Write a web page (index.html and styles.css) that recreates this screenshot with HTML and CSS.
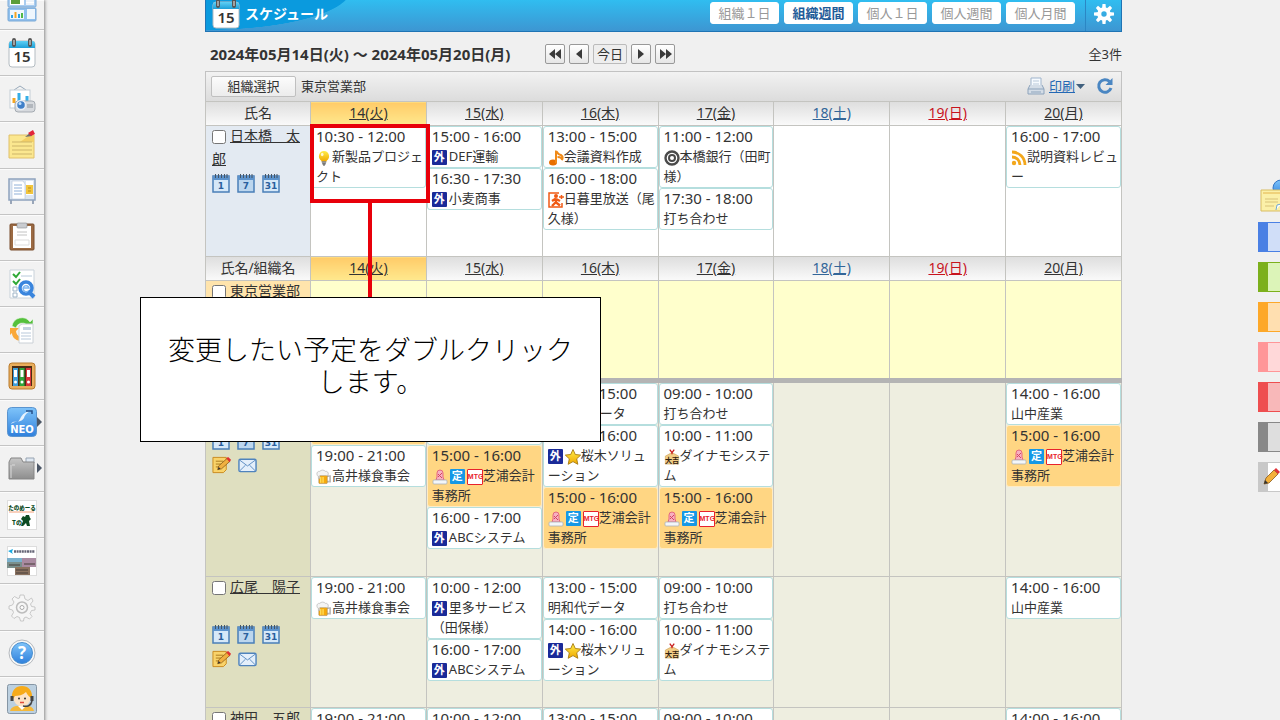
FILE: index.html
```html
<!DOCTYPE html>
<html lang="ja">
<head>
<meta charset="utf-8">
<title>スケジュール</title>
<link rel="stylesheet" href="styles.css">
</head>
<body>
<svg class="defs" aria-hidden="true">
  <defs>
    <linearGradient id="gBlue" x1="0" y1="0" x2="0" y2="1"><stop offset="0" stop-color="#7fc4fa"/><stop offset="1" stop-color="#2f80dc"/></linearGradient>
    <linearGradient id="gCyan" x1="0" y1="0" x2="0" y2="1"><stop offset="0" stop-color="#5fd0f5"/><stop offset="1" stop-color="#1d9fd8"/></linearGradient>
    <linearGradient id="gGold" x1="0" y1="0" x2="0" y2="1"><stop offset="0" stop-color="#ffee4a"/><stop offset="1" stop-color="#f0a800"/></linearGradient>
    <linearGradient id="gGray" x1="0" y1="0" x2="0" y2="1"><stop offset="0" stop-color="#c6c6c6"/><stop offset="1" stop-color="#8e8e8e"/></linearGradient>
  </defs>
  <symbol id="cal15" viewBox="0 0 28 30">
    <rect x="1" y="3" width="26" height="26" rx="3" fill="#fff" stroke="#b4bcc2"/>
    <path d="M1 10V6a3 3 0 0 1 3-3h20a3 3 0 0 1 3 3v4z" fill="url(#gCyan)"/>
    <path d="M6 2v5M22 2v5" stroke="#555" stroke-width="4" stroke-linecap="round"/><path d="M6 2v5M22 2v5" stroke="#bbb" stroke-width="1.5"/>
    <text x="14" y="24" text-anchor="middle" font-size="15" font-weight="600" font-family="Noto Sans, sans-serif" fill="#333">15</text>
  </symbol>
  <symbol id="d1" viewBox="0 0 18 20"><rect x="1" y="3" width="16" height="16" fill="#d6e8f8" stroke="#4a7fb8" stroke-width="1.5"/><path d="M1 3h16v4H1z" fill="#5b92cc"/><path d="M3.500 1v4M6.500 1v4M9.500 1v4M12.500 1v4M15 1v4" stroke="#456" stroke-width="1"/><text x="9" y="16" text-anchor="middle" class="dnum">1</text></symbol>
  <symbol id="d7" viewBox="0 0 18 20"><rect x="1" y="3" width="16" height="16" fill="#bcd6ee" stroke="#4a7fb8" stroke-width="1.5"/><path d="M1 3h16v4H1z" fill="#5b92cc"/><path d="M3.500 1v4M6.500 1v4M9.500 1v4M12.500 1v4M15 1v4" stroke="#456" stroke-width="1"/><text x="9" y="16" text-anchor="middle" class="dnum">7</text></symbol>
  <symbol id="d31" viewBox="0 0 18 20"><rect x="1" y="3" width="16" height="16" fill="#d6e8f8" stroke="#4a7fb8" stroke-width="1.5"/><path d="M1 3h16v4H1z" fill="#5b92cc"/><path d="M3.500 1v4M6.500 1v4M9.500 1v4M12.500 1v4M15 1v4" stroke="#456" stroke-width="1"/><text x="9" y="16" text-anchor="middle" class="dnum">31</text></symbol>
  <symbol id="memo" viewBox="0 0 20 18"><path d="M1 1h14v13l-3 3H1z" fill="#f9d36a" stroke="#c98a1e"/><path d="M4 5h8M4 8h6M4 11h4" stroke="#a9781e"/><path d="M6 14l1-4L16 2l3 3-9 8z" fill="#f0b040" stroke="#8a5a14" stroke-width=".8"/><path d="M15 2l2-1.500 3 3L18.500 6z" fill="#e03030"/><path d="M6 14l1-3 2 2z" fill="#333"/></symbol>
  <symbol id="mail" viewBox="0 0 20 16"><rect x="1" y="2" width="18" height="13" rx="1.500" fill="#e4effb" stroke="#4f83bd" stroke-width="1.500"/><path d="M2 3l8 6 8-6M2 14l6-6M18 14l-6-6" fill="none" stroke="#5c8cc2"/></symbol>
  <symbol id="bulb" viewBox="0 0 16 18"><path d="M8 1a6 6 0 0 0-3 11v1h6v-1A6 6 0 0 0 8 1z" fill="url(#gGold)"/><ellipse cx="6" cy="5" rx="1.500" ry="2" fill="#fff" opacity=".8"/><path d="M5.500 13.500h5M6 15.500h4M7 17h2" stroke="#777" stroke-width="1.500"/></symbol>
  <symbol id="note" viewBox="0 0 16 16"><ellipse cx="5" cy="12.500" rx="4" ry="3" fill="#e87000"/><path d="M8 13V1.500c2 0 1 2.500 3.500 3C14 5 15.500 7 14 10c0-2.500-2.500-3-4.500-3" fill="none" stroke="#f08a18" stroke-width="2"/></symbol>
  <symbol id="exit" viewBox="0 0 16 16"><path d="M11 1H1v14h13v-4" fill="#fff" stroke="#f05a14" stroke-width="1.500"/><circle cx="8" cy="4" r="2" fill="#f05a14"/><path d="M8 6.500L4 9M8 6.500v4l4 3M8 10l-4 4M8 7l4 2" stroke="#f05a14" stroke-width="2.400" fill="none"/><path d="M11 5h5M13.500 3v4" stroke="#f05a14" stroke-width="1.500"/></symbol>
  <symbol id="target" viewBox="0 0 16 16"><circle cx="8" cy="8" r="6.500" fill="#fff" stroke="#4a4a4a" stroke-width="2.400"/><circle cx="8" cy="8" r="3" fill="#fff" stroke="#4a4a4a" stroke-width="2"/></symbol>
  <symbol id="rss" viewBox="0 0 16 16"><g fill="none" stroke="#f3a71b" stroke-width="2.800"><path d="M1 2a13 13 0 0 1 13 13M1 7a8 8 0 0 1 8 8"/></g><circle cx="3" cy="13" r="2.200" fill="#f3a71b"/></symbol>
  <symbol id="beer" viewBox="0 0 17 16"><path d="M11 7h4v6h-4" fill="none" stroke="#b9b9b9" stroke-width="1.800"/><rect x="3" y="5" width="9" height="10" rx="1" fill="#f5a90c" stroke="#a98450" stroke-width=".6"/><path d="M5 8v6M7.500 8v6" stroke="#ffdc58" stroke-width="1.500"/><path d="M1 5a2.500 2.500 0 0 1 3-3 4 4 0 0 1 6 0 2.500 2.500 0 0 1 3 3c0 2-2 1.500-2 1.500H4v3H2.500V7S1 7 1 5z" fill="#f4f4f4" stroke="#a9a9a9" stroke-width=".6"/></symbol>
  <symbol id="stamp" viewBox="0 0 16 16"><path d="M5 8V4a3 3 0 0 1 6 0v4l1 3H4z" fill="#f7b0c0" stroke="#e5687e"/><path d="M6 8l4-4M6 5l4 4" stroke="#d44562"/><rect x="1" y="11" width="14" height="4" rx="1" fill="#f3f6f9" stroke="#aab1b8" stroke-width=".8"/></symbol>
  <symbol id="star" viewBox="0 0 16 16"><path d="M8 .5l2.300 5 5.400.6-4 3.700 1.100 5.500L8 12.600l-4.800 2.700 1.100-5.500-4-3.700 5.400-.6z" fill="url(#gGold)" stroke="#a77a10" stroke-width=".9"/></symbol>
  <symbol id="daikichi" viewBox="0 0 17 18"><path d="M1 8l7.500-4L16 8v9H1z" fill="#f1cc85" stroke="#c79b50" stroke-width=".6"/><path d="M6 .8L8.500 4 11 .8M8.500 3v3" fill="none" stroke="#c81e1e" stroke-width="1.500"/><text x="8.500" y="15.500" text-anchor="middle" font-size="8" font-weight="700" font-family="Noto Sans CJK JP, sans-serif" fill="#302010">大吉</text></symbol>
  <symbol id="gear" viewBox="0 0 20 20"><g fill="currentColor"><path id="tooth" d="M8.500 0h3l.5 5H8z"/><use href="#tooth" transform="rotate(45 10 10)"/><use href="#tooth" transform="rotate(90 10 10)"/><use href="#tooth" transform="rotate(135 10 10)"/><use href="#tooth" transform="rotate(180 10 10)"/><use href="#tooth" transform="rotate(225 10 10)"/><use href="#tooth" transform="rotate(270 10 10)"/><use href="#tooth" transform="rotate(315 10 10)"/></g><circle cx="10" cy="10" r="4.700" fill="none" stroke="currentColor" stroke-width="4"/></symbol>
</svg>

<div class="shell">
  <nav class="side" aria-label="メニュー">
    <a class="side-item side-first" href="#" aria-label="ポータル"><svg width="30" height="32" viewBox="0 0 30 32"><rect x="1" y="0" width="28" height="17" rx="1" fill="#a9cdf0" stroke="#7ba9d6"/><path d="M3 2h14v13H3zM19 2h8v13h-8z" fill="#fff"/><path d="M4 14V8l9-4v10z" fill="#5b9e3a"/><path d="M19 14h8M19 11h8" stroke="#dce8f4"/><rect x="1" y="18" width="28" height="13" rx="1" fill="#8fc0ee" stroke="#7ba9d6"/><path d="M3 20h14v9H3zM20 19h8v10h-8z" fill="#eef6fd"/><path d="M5 28v-3M12 28v-4" stroke="#29a3e8" stroke-width="2"/><path d="M8.500 28v-6" stroke="#f5a623" stroke-width="2"/><path d="M15 28v-5" stroke="#50b848" stroke-width="2"/></svg></a>
    <a class="side-item" href="#" aria-label="スケジュール"><svg width="28" height="30"><use href="#cal15"/></svg></a>
    <a class="side-item" href="#" aria-label="設備予約"><svg width="28" height="30" viewBox="0 0 28 30"><path d="M6 6l6-4 6 4" fill="none" stroke="#9ab"/><rect x="2" y="6" width="20" height="18" fill="#fff" stroke="#c3cdd6"/><path d="M6 19v-5" stroke="#f5a623" stroke-width="3"/><path d="M11 18V9M19 18v-6" stroke="#36aee6" stroke-width="3"/><rect x="7" y="17" width="20" height="11" rx="3" fill="#d7dade" stroke="#a5abb2"/><path d="M19 20h6v4h-6z" fill="#b2b7bd"/><circle cx="13" cy="21" r="4.500" fill="#3f7fc8" stroke="#e8eef5" stroke-width="1.500"/><circle cx="12" cy="19.500" r="1.500" fill="#bfe0ff"/></svg></a>
    <a class="side-item" href="#" aria-label="伝言メモ"><svg width="28" height="30" viewBox="0 0 28 30"><path d="M1 5h25v23H1z" fill="#fbe78f" stroke="#e0c06a"/><path d="M12 12L22 5h4v7z" fill="#f3cf66"/><path d="M4 12h20M4 16h20M4 20h20M4 24h20" stroke="#cdb56a"/><path d="M17 7l5-4 2 3z" fill="#6a6a6a"/><path d="M20 3l5-3 2 4-4 2z" fill="#e2253a"/></svg></a>
    <a class="side-item" href="#" aria-label="掲示板"><svg width="28" height="30" viewBox="0 0 28 30"><path d="M3 24v4M25 24v4" stroke="#9aa6b8" stroke-width="2"/><rect x="1" y="3" width="26" height="21" fill="#dce6f2" stroke="#8fa3bd" stroke-width="1.500"/><path d="M4 5h11l2 3v15H4z" fill="#fff" stroke="#b4c4d8" stroke-width=".6"/><path d="M6 9h8M6 12h8M6 15h8M6 18h8" stroke="#8fb0d8"/><rect x="18" y="5" width="7" height="14" fill="#fff"/><rect x="18" y="9" width="7" height="9" fill="#f2c53d"/><path d="M20 12h3M20 15h3" stroke="#b78d18"/></svg></a>
    <a class="side-item" href="#" aria-label="回覧板"><svg width="28" height="30" viewBox="0 0 28 30"><rect x="2" y="2" width="24" height="26" rx="1" fill="#9b6a43" stroke="#7a4f2e"/><path d="M5 4h18v22H5z" fill="#fff"/><rect x="9" y="1" width="10" height="5" rx="1" fill="#c9ccd0" stroke="#8a8d91" stroke-width=".6"/><path d="M9 10h10M9 13h10" stroke="#c2c2c2"/><path d="M7 18h14v5H7z" fill="none" stroke="#ddd"/></svg></a>
    <a class="side-item" href="#" aria-label="アンケート"><svg width="28" height="30" viewBox="0 0 28 30"><path d="M2 1h24v28H2z" fill="#fff" stroke="#c9d2da"/><path d="M5 5l3 3 4-5M5 12l3 3 4-5" fill="none" stroke="#2fa836" stroke-width="2"/><path d="M5 18h4v4H5zM5 24h4v4H5z" fill="#fff" stroke="#9db3c6"/><path d="M13 7h11" stroke="#b8cadb"/><circle cx="18" cy="19" r="6" fill="#fff" stroke="#3a85dd" stroke-width="3.500"/><path d="M20 22l6 6" stroke="#3a85dd" stroke-width="4"/><path d="M15 19h6a3 3 0 1 0-1 3" stroke="#7fb6f0" stroke-width="1.500" fill="none"/></svg></a>
    <a class="side-item" href="#" aria-label="ワークフロー"><svg width="28" height="30" viewBox="0 0 28 30"><path d="M4 11A10 10 0 0 1 22 7l3-3v9h-9l3-3a6.500 6.500 0 0 0-11 3z" fill="#55c03c" stroke="#e8f7e4" stroke-width=".6"/><path d="M2 13h9l-3 3c0 3 2 5 4 6v4c-5-1-8-4-8-8l-2 2z" fill="#f9a83a"/><path d="M11 11l3-2h11v19H11z" fill="#fff" stroke="#cad0d6"/><path d="M15 12h8v3h-8z" fill="#c3d2e0"/><path d="M13 18h10M13 21h10M13 24h10" stroke="#b9c9da"/></svg></a>
    <a class="side-item" href="#" aria-label="文書管理"><svg width="28" height="28" viewBox="0 0 28 28"><rect x="1" y="1" width="26" height="26" rx="3" fill="#e9ae5c" stroke="#b97a2c"/><path d="M4 4h20v20H4z" fill="#4a2c14"/><path d="M5 6h5v18H5z" fill="#3f9fd8"/><path d="M11.500 6h5v18h-5z" fill="#2fa63c"/><path d="M18 6h5v18h-5z" fill="#d9343c"/><path d="M6 8h3v7H6zM12.500 8h3v7h-3zM19 8h3v7h-3z" fill="#fff"/><g fill="#fff"><circle cx="7.500" cy="20" r="1.500"/><circle cx="14" cy="20" r="1.500"/><circle cx="20.500" cy="20" r="1.500"/></g></svg></a>
    <a class="side-item has-more" href="#" aria-label="NEO"><svg width="30" height="30" viewBox="0 0 30 30"><rect x=".5" y=".5" width="29" height="29" rx="4" fill="url(#gBlue)" stroke="#5a94cf"/><path d="M4 17c3-5 6 1 9-5 2-5 6-8 12-8-3 0-7 3-8 7-3 5-7 2-13 6z" fill="#e9f3fd"/><path d="M19 4h6v3" fill="none" stroke="#27518a" stroke-width="1.500"/><text x="15" y="26" text-anchor="middle" font-size="10" font-weight="700" font-family="DejaVu Sans, sans-serif" fill="#fff">NEO</text></svg></a>
    <a class="side-item has-more" href="#" aria-label="フォルダ"><svg width="28" height="26" viewBox="0 0 28 26"><path d="M18 3h8v5h-8z" fill="#dfe8f2" stroke="#98a4b2"/><path d="M1 7l2-4h10l2 4h11v17H1z" fill="url(#gGray)" stroke="#858585"/><path d="M4 10h3M3 10v13" stroke="#dadada"/></svg></a>
    <a class="side-item" href="#" aria-label="たのめーる"><svg width="30" height="30" viewBox="0 0 30 30"><rect x=".5" y=".5" width="29" height="29" fill="#fff" stroke="#ddd"/><text x="15" y="10" text-anchor="middle" font-size="5.500" font-weight="900" font-family="Noto Sans CJK JP, sans-serif" fill="#0b4a22">たのめーる</text><path d="M2 12h25" stroke="#f08a5a" stroke-width=".8"/><text x="10" y="25" text-anchor="middle" font-size="6" font-weight="900" font-family="Noto Sans CJK JP, sans-serif" fill="#0b4a22">Tの</text><path d="M16 16l2 1 1-2h3l1 3 1 1-2 2 1 5h-3l-1-3-3 3h-2l2-5-2-2z" fill="#0b4a22"/></svg></a>
    <a class="side-item" href="#" aria-label="施設案内"><svg width="30" height="30" viewBox="0 0 30 30"><rect x=".5" y=".5" width="29" height="29" fill="#fff" stroke="#ddd"/><path d="M1 5l5-2-1 3 1 2z" fill="#18a8e0"/><path d="M7 5.500h21" stroke="#667" stroke-width="2.500" stroke-dasharray="2 .6"/><path d="M0 12h15v10H0z" fill="#7a8f8c"/><path d="M0 12h15v4H0z" fill="#7ab0cc"/><path d="M15 12h14v9H15z" fill="#a98aa0"/><path d="M8 21h15v8H8z" fill="#8a7260"/><path d="M9 24h12M9 27h12M2 19h11M17 18h11" stroke="#463c38"/></svg></a>
    <a class="side-item side-gear" href="#" aria-label="設定"><svg width="26" height="26" viewBox="0 0 26 26"><g fill="#f6f6f6" stroke="#bdbdbd"><path d="M11 1h4l1 4 3 1.500L22.500 4 24 7l-2.500 3 1 2.500L26 13v3l-3.500.5-1.500 3 2 3-2.500 2.500-3.500-2-2 1-.5 3h-3l-1-3.500-2.500-1L5 24.500 2.500 22l2-3.500-1-2.500L0 15v-3l3.500-1L5 8 3 5l2.500-2.500 3.500 2 1.500-.5z" stroke-linejoin="round" stroke-width=".8"/><circle cx="13" cy="13.500" r="5.500" stroke-width="1.500"/><circle cx="13" cy="13.500" r="2" fill="#fff" stroke="#aaa"/></g></svg></a>
    <a class="side-item" href="#" aria-label="ヘルプ"><svg width="28" height="28" viewBox="0 0 28 28"><circle cx="14" cy="14" r="13" fill="#f8f8f8" stroke="#b5b9be"/><circle cx="14" cy="14" r="10.500" fill="url(#gBlue)" stroke="#4a90d0"/><text x="14" y="20" text-anchor="middle" font-size="17" font-weight="700" font-family="Open Sans, sans-serif" fill="#fff">?</text></svg></a>
    <a class="side-item" href="#" aria-label="サポート"><svg width="30" height="30" viewBox="0 0 30 30"><rect x=".5" y=".5" width="29" height="29" rx="2" fill="#bcd0e0" stroke="#8595a4"/><path d="M3 27c1-4 5-5 7-5h10c3 0 6 1 7 5z" fill="#f5b83a"/><path d="M11 22h8l-4 4z" fill="#fff"/><circle cx="15" cy="14" r="8.500" fill="#fde3c6"/><path d="M5 15C4 6 9 2 15 2s11 4 10 13c-2-2-5-4-6-7-3 3-8 4-11 4-1 1-1 3-3 3z" fill="#f7ab1a"/><path d="M5 12v5M25 12v5" stroke="#444" stroke-width="3"/><path d="M25 17c-1 5-5 6-9 5" fill="none" stroke="#444" stroke-width="1.500"/><circle cx="12" cy="14.500" r="1" fill="#333"/><circle cx="18" cy="14.500" r="1" fill="#333"/><path d="M13 18.500h4" stroke="#e24a3a" stroke-width="1.500"/></svg></a>
  </nav>

  <main class="main">
    <header class="titlebar">
      <h1 class="title"><svg width="28" height="30"><use href="#cal15"/></svg>スケジュール</h1>
      <div class="tabs">
        <button type="button" class="tab">組織１日</button>
        <button type="button" class="tab tab-on">組織週間</button>
        <button type="button" class="tab">個人１日</button>
        <button type="button" class="tab">個人週間</button>
        <button type="button" class="tab">個人月間</button>
      </div>
      <button type="button" class="config" aria-label="設定"><svg width="20" height="20"><use href="#gear"/></svg></button>
    </header>

    <div class="range">
      <h2 class="range-text">2024年05月14日(火) ～ 2024年05月20日(月)</h2>
      <div class="pager">
        <button type="button" class="step" aria-label="前週"><svg width="13" height="10" viewBox="0 0 13 10"><path d="M6 0v10L0 5zM12 0v10L6 5z" fill="#3a3a3a"/></svg></button>
        <button type="button" class="step" aria-label="前日"><svg width="6" height="10" viewBox="0 0 6 10"><path d="M6 0v10L0 5z" fill="#3a3a3a"/></svg></button>
        <button type="button" class="step today-btn">今日</button>
        <button type="button" class="step" aria-label="翌日"><svg width="6" height="10" viewBox="0 0 6 10"><path d="M0 0v10l6-5z" fill="#3a3a3a"/></svg></button>
        <button type="button" class="step" aria-label="翌週"><svg width="13" height="10" viewBox="0 0 13 10"><path d="M1 0v10l6-5zM7 0v10l6-5z" fill="#3a3a3a"/></svg></button>
      </div>
      <span class="count">全3件</span>
    </div>

    <div class="toolbar">
      <button type="button" class="org-btn">組織選択</button>
      <span class="org-name">東京営業部</span>
      <a class="print" href="#"><svg width="18" height="18" viewBox="0 0 18 18"><path d="M4 1h10v9H4z" fill="#f6fafe" stroke="#9fb4cc"/><path d="M6 4h6M6 7h6" stroke="#b9c9da"/><path d="M3 8L1 12v5h16v-5l-2-4" fill="#d4dde7" stroke="#8da3bb"/><path d="M1 12h16M4 15h10" stroke="#8da3bb"/></svg><span class="print-text">印刷</span><svg width="9" height="5" viewBox="0 0 9 5"><path d="M0 0h9L4.500 5z" fill="#41617f"/></svg></a>
      <button type="button" class="reload" aria-label="更新"><svg width="18" height="18" viewBox="0 0 18 18"><path d="M13.500 4.500A6.300 6.300 0 1 0 15 11" fill="none" stroke="#4a86c2" stroke-width="3"/><path d="M16.500 1v7h-7z" fill="#4a86c2"/></svg></button>
    </div>

    <table class="week">
      <colgroup><col class="col-name"><col span="7"></colgroup>
      <tbody>
        <tr class="days"><th>氏名</th><th class="today"><a href="#">14(火)</a></th><th><a href="#">15(水)</a></th><th><a href="#">16(木)</a></th><th><a href="#">17(金)</a></th><th class="sat"><a href="#">18(土)</a></th><th class="sun"><a href="#">19(日)</a></th><th><a href="#">20(月)</a></th></tr>
        <tr class="row self">
          <td class="who"><div class="person"><input type="checkbox" id="p1" aria-label="日本橋　太郎"><a href="#">日本橋　太郎</a></div>
            <div class="views"><svg><use href="#d1"/></svg><svg><use href="#d7"/></svg><svg><use href="#d31"/></svg></div></td>
          <td><div class="ev">10:30 - 12:00<p><svg class="ic"><use href="#bulb"/></svg>新製品プロジェ<br>クト</p></div></td>
          <td><div class="ev">15:00 - 16:00<p><i class="tag out">外</i>DEF運輸</p></div><div class="ev">16:30 - 17:30<p><i class="tag out">外</i>小麦商事</p></div></td>
          <td><div class="ev">13:00 - 15:00<p><svg class="ic"><use href="#note"/></svg>会議資料作成</p></div><div class="ev">16:00 - 18:00<p><svg class="ic"><use href="#exit"/></svg>日暮里放送（尾<br>久様）</p></div></td>
          <td><div class="ev">11:00 - 12:00<p><svg class="ic"><use href="#target"/></svg>本橋銀行（田町<br>様）</p></div><div class="ev">17:30 - 18:00<p>打ち合わせ</p></div></td>
          <td></td><td></td>
          <td><div class="ev">16:00 - 17:00<p><svg class="ic"><use href="#rss"/></svg>説明資料レビュ<br>ー</p></div></td>
        </tr>
        <tr class="days"><th>氏名/組織名</th><th class="today"><a href="#">14(火)</a></th><th><a href="#">15(水)</a></th><th><a href="#">16(木)</a></th><th><a href="#">17(金)</a></th><th class="sat"><a href="#">18(土)</a></th><th class="sun"><a href="#">19(日)</a></th><th><a href="#">20(月)</a></th></tr>
        <tr class="row org">
          <td class="who"><div class="person"><input type="checkbox" id="p2"><label for="p2">東京営業部</label></div></td>
          <td></td><td></td><td></td><td></td><td></td><td></td><td></td>
        </tr>
        <tr class="row member first">
          <td class="who"><div class="person"></div>
            <div class="views"><svg><use href="#d1"/></svg><svg><use href="#d7"/></svg><svg><use href="#d31"/></svg></div>
            <div class="views"><svg class="wide"><use href="#memo"/></svg><svg class="wide"><use href="#mail"/></svg></div></td>
          <td><div class="ev hot blank"></div><div class="ev">19:00 - 21:00<p><svg class="ic"><use href="#beer"/></svg>高井様食事会</p></div></td>
          <td><div class="ev blank"></div><div class="ev hot">15:00 - 16:00<p><svg class="ic"><use href="#stamp"/></svg><i class="tag reg">定</i><i class="tag mtg">MTG</i>芝浦会計<br>事務所</p></div><div class="ev">16:00 - 17:00<p><i class="tag out">外</i>ABCシステム</p></div></td>
          <td><div class="ev">13:00 - 15:00<p>明和代データ</p></div><div class="ev">14:00 - 16:00<p><i class="tag out">外</i><svg class="ic"><use href="#star"/></svg>桜木ソリュ<br>ーション</p></div><div class="ev hot">15:00 - 16:00<p><svg class="ic"><use href="#stamp"/></svg><i class="tag reg">定</i><i class="tag mtg">MTG</i>芝浦会計<br>事務所</p></div></td>
          <td><div class="ev">09:00 - 10:00<p>打ち合わせ</p></div><div class="ev">10:00 - 11:00<p><svg class="ic"><use href="#daikichi"/></svg>ダイナモシステ<br>ム</p></div><div class="ev hot">15:00 - 16:00<p><svg class="ic"><use href="#stamp"/></svg><i class="tag reg">定</i><i class="tag mtg">MTG</i>芝浦会計<br>事務所</p></div></td>
          <td></td><td></td>
          <td><div class="ev">14:00 - 16:00<p>山中産業</p></div><div class="ev hot">15:00 - 16:00<p><svg class="ic"><use href="#stamp"/></svg><i class="tag reg">定</i><i class="tag mtg">MTG</i>芝浦会計<br>事務所</p></div></td>
        </tr>
        <tr class="row member">
          <td class="who"><div class="person"><input type="checkbox" id="p4" aria-label="広尾　陽子"><a href="#">広尾　陽子</a></div>
            <div class="views"><svg><use href="#d1"/></svg><svg><use href="#d7"/></svg><svg><use href="#d31"/></svg></div>
            <div class="views"><svg class="wide"><use href="#memo"/></svg><svg class="wide"><use href="#mail"/></svg></div></td>
          <td><div class="ev">19:00 - 21:00<p><svg class="ic"><use href="#beer"/></svg>高井様食事会</p></div></td>
          <td><div class="ev">10:00 - 12:00<p><i class="tag out">外</i>里多サービス<br>（田保様）</p></div><div class="ev">16:00 - 17:00<p><i class="tag out">外</i>ABCシステム</p></div></td>
          <td><div class="ev">13:00 - 15:00<p>明和代データ</p></div><div class="ev">14:00 - 16:00<p><i class="tag out">外</i><svg class="ic"><use href="#star"/></svg>桜木ソリュ<br>ーション</p></div></td>
          <td><div class="ev">09:00 - 10:00<p>打ち合わせ</p></div><div class="ev">10:00 - 11:00<p><svg class="ic"><use href="#daikichi"/></svg>ダイナモシステ<br>ム</p></div></td>
          <td></td><td></td>
          <td><div class="ev">14:00 - 16:00<p>山中産業</p></div></td>
        </tr>
        <tr class="row member">
          <td class="who"><div class="person"><input type="checkbox" id="p5" aria-label="神田　五郎"><a href="#">神田　五郎</a></div></td>
          <td><div class="ev">19:00 - 21:00</div></td>
          <td><div class="ev">10:00 - 12:00</div></td>
          <td><div class="ev">13:00 - 15:00</div></td>
          <td><div class="ev">09:00 - 10:00</div></td>
          <td></td><td></td>
          <td><div class="ev">14:00 - 16:00</div></td>
        </tr>
      </tbody>
    </table>

    <div class="mark"></div>
    <div class="mark-line"></div>
    <p class="callout">変更したい予定をダブルクリック<br>します。</p>
  </main>

  <aside class="rail" aria-label="付箋">
    <svg class="rail-note" width="21" height="32" viewBox="0 0 21 32"><circle cx="21" cy="8" r="8" fill="url(#gBlue)" stroke="#3676c4"/><path d="M1 10h21v21H1z" fill="#fbf0a8" stroke="#d9bd62"/><path d="M3 13h18" stroke="#efd27a" stroke-width="2"/><path d="M5 19h13M5 22h13M5 26h9" stroke="#d8c279"/><path d="M16 30l1-5 4-1" fill="#fff" stroke="#6fa9d0"/></svg>
    <button type="button" class="flag blue" aria-label="青"></button>
    <button type="button" class="flag green" aria-label="緑"></button>
    <button type="button" class="flag orange" aria-label="橙"></button>
    <button type="button" class="flag pink" aria-label="桃"></button>
    <button type="button" class="flag red" aria-label="赤"></button>
    <button type="button" class="flag gray" aria-label="灰"></button>
    <button type="button" class="flag edit" aria-label="編集"><svg width="16" height="18" viewBox="0 0 16 18"><path d="M1 16l2-6 8-8 4 4-9 9z" fill="#f3b03a" stroke="#8c5a1a" stroke-width=".8"/><path d="M11 2l2-2 4 4-2 2z" fill="#e03338"/><path d="M1 16l1-4 3 3z" fill="#333"/></svg></button>
  </aside>
</div>
</body>
</html>
```
FILE: styles.css
```css
* { box-sizing: border-box; }

body {
  margin: 0;
  background: #f0f0f0;
  color: #333;
  font: 13px/20px "Noto Sans", "Noto Sans CJK JP", sans-serif;
}

h1, h2, p { margin: 0; }
button { font: inherit; color: inherit; padding: 0; margin: 0; cursor: pointer; }
a { color: inherit; }
svg { flex: none; overflow: visible; }
.defs { position: absolute; width: 0; height: 0; }
.dnum { font: 700 9px "DejaVu Sans", sans-serif; fill: #2a5f9e; }

.shell { display: flex; height: 100vh; overflow: hidden; }

/* left menu */
.side {
  display: flex;
  flex: none;
  flex-direction: column;
  width: 44px;
  margin-bottom: -3px;
  background: #f2f2f2;
  box-shadow: 1px 0 3px #888;
}
.side-item {
  position: relative;
  display: flex;
  flex: 1 1 46px;
  align-items: center;
  justify-content: center;
  min-height: 46px;
  padding-right: 1px;
  border-bottom: 1px solid #c4c4c4;
  box-shadow: inset 0 1px #fbfbfb;
}
.side-first { flex: none; align-items: flex-end; height: 30px; min-height: 0; padding-bottom: 7px; overflow: hidden; }
.has-more::after {
  content: "";
  position: absolute;
  right: 2px;
  border: 5px solid transparent;
  border-right-width: 0;
  border-left-color: #4b5666;
}

/* main column */
.main { position: relative; flex: 1; min-width: 0; margin: 0 136px 0 161px; }

.titlebar {
  display: flex;
  height: 32px;
  border: 1px solid #1f74b4;
  border-top: 0;
  background: radial-gradient(ellipse 145px 40px at 0 -10px, #0a9ade 99%, transparent) no-repeat, linear-gradient(#30bdf0, #3d96d2);
}
.title {
  display: flex;
  flex: 1;
  align-items: center;
  gap: 5px;
  padding: 0 0 4px 6px;
  color: #fff;
  font-size: 14px;
}
.tabs { display: flex; gap: 5px; padding: 2px 10px 7px 0; }
.tab { width: 69px; border: 1px solid #fff; border-radius: 3px; background: #fff; color: #999; line-height: 18px; }
.tab-on { color: #1f5c99; font-weight: 700; }
.config { width: 36px; padding-bottom: 3px; border: 0; border-left: 1px solid #2b86c4; background: none; color: #fff; line-height: 0; }

.range { display: flex; align-items: center; height: 39px; padding: 5px 0 0 5px; }
.range-text { width: 335px; font-size: 15px; white-space: nowrap; }
.pager { display: flex; flex: 1; gap: 4px; }
.step {
  display: flex;
  align-items: center;
  justify-content: center;
  width: 20px;
  height: 20px;
  border: 1px solid #999;
  border-radius: 2px;
  background: linear-gradient(#fff, #e6e6e6);
}
.today-btn { width: 34px; border-color: #bbb; background: #eee; }
.count { font-size: 13px; }

.toolbar {
  display: flex;
  align-items: center;
  height: 30px;
  padding: 0 7px 1px 5px;
  border: 1px solid #c2c2c2;
  border-bottom: 0;
  background: linear-gradient(#f2f2f2, #dcdcdc);
}
.org-btn { width: 85px; height: 21px; border: 1px solid #c0c0c0; border-radius: 2px; background: linear-gradient(#fcfcfc, #ececec); line-height: 17px; }
.org-name { flex: 1; padding-left: 5px; }
.print { display: flex; align-items: center; color: #2468b4; text-decoration: none; }
.print-text { padding: 0 1px 0 4px; text-decoration: underline; }
.reload { padding: 0; margin-left: 11px; border: 0; background: none; line-height: 0; }

/* schedule grid */
.week { width: 100%; table-layout: fixed; border-collapse: collapse; background: #fff; }
.col-name { width: 105px; }
.week th, .week td { padding: 0; border: 1px solid #c4c4c0; }
.days { height: 24px; background: linear-gradient(#dedede, #fbfbfb); }
.week .days th { padding-bottom: 2px; font-size: 14px; font-weight: 400; line-height: 20px; }
.days .today { background: linear-gradient(#ffcb68, #ffe98e); }
.sat { color: #336699; }
.sun { color: #c8141e; }

.row { height: 131px; vertical-align: top; }
.row.org { height: 100px; background: #ffffcc; }
.row.first { height: 196px; }
.row.first td { border-top: 5px solid #b4b4b4; }
.member { background: #eeeee0; }
.who { background: #dfdfc0; }
.self .who { background: #e3eaf2; }
.org .who { background: #ffe4ac; }

.person { min-height: 48px; margin-top: -2px; padding: 0 6px; font-size: 14px; line-height: 23px; }
.person input { width: 14px; height: 14px; margin: 0 4px 0 0; vertical-align: -3px; }
.views { display: flex; gap: 7px; height: 26px; padding: 1px 0 0 6px; }
.views svg { width: 18px; height: 20px; }
.views .wide { width: 19px; height: 18px; }

.ev {
  padding: 0 0 0 4px;
  border: 1px solid #b5dede;
  border-radius: 3px;
  background: #fff;
  font-size: 15px;
  line-height: 18px;
  white-space: nowrap;
}
.ev p { padding: 1px 0; font-size: 13px; line-height: 20px; }
.hot { border-color: #ffecc4; background: #ffd683; }
.blank { height: 62px; }
.ic { width: 16px; height: 16px; vertical-align: middle; }
.tag {
  display: inline-block;
  width: 15px;
  height: 15px;
  margin-right: 2px;
  border-radius: 1px;
  color: #fff;
  font-size: 11px;
  font-style: normal;
  font-weight: 700;
  line-height: 14px;
  text-align: center;
  vertical-align: middle;
}
.out { background: #1a2a98; }
.reg { margin-left: 2px; background: #1598e6; }
.mtg { width: 16px; height: 16px; margin-right: 0; border: 1px solid #e8222c; background: #fff; color: #e8222c; font: 700 7px/14px "Liberation Sans Narrow", "Liberation Sans", sans-serif; }

/* annotation over the page */
.mark { position: absolute; top: 124px; left: 105px; width: 120px; height: 79px; border: 4px solid #e8000a; }
.mark-line { position: absolute; top: 199px; left: 163px; width: 4px; height: 98px; background: #e8000a; }
.callout {
  position: absolute;
  top: 297px;
  left: -65px;
  width: 461px;
  padding: 36px 0 43px;
  border: 1px solid #000;
  background: #fff;
  color: #000;
  font-size: 27px;
  font-weight: 300;
  line-height: 32px;
  text-align: center;
}

/* sticky-note rail, cut by the window edge */
.rail { display: flex; flex: none; flex-direction: column; gap: 10px; width: 22px; padding-top: 180px; overflow: hidden; }
.rail-note { margin-left: 2px; }
.flag { flex: none; width: 40px; height: 30px; border: 1px solid; border-left-width: 10px; }
.blue { border-color: #4a80e4; background: #d0def8; }
.green { border-color: #7cb01c; background: #dcf4b8; }
.orange { border-color: #fda829; background: #ffdfb0; }
.pink { border-color: #ff9698; background: #ffd8d9; }
.red { border-color: #ee4e50; background: #f8b8b9; }
.gray { border-color: #888; background: #dedede; }
.edit { border-color: #c8c8c8; background: #fff; text-align: left; line-height: 0; }
.edit svg { margin-left: -5px; }
```
